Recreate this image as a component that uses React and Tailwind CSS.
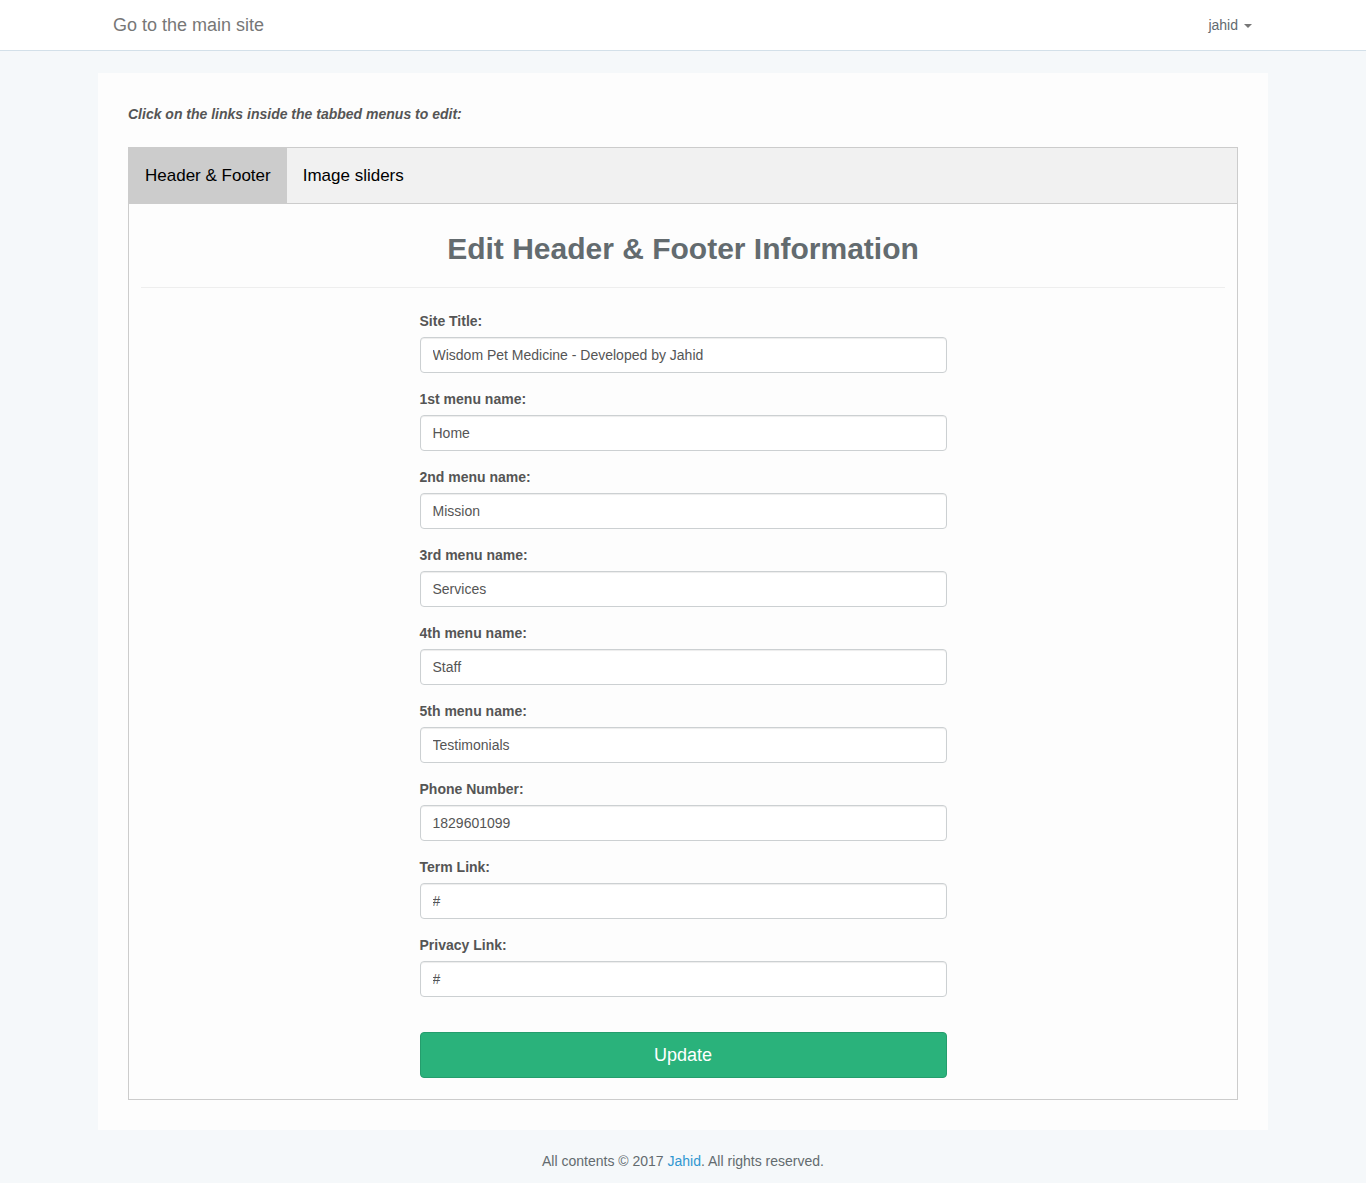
import React from 'react';

const fields = [
  { label: 'Site Title:', value: 'Wisdom Pet Medicine - Developed by Jahid' },
  { label: '1st menu name:', value: 'Home' },
  { label: '2nd menu name:', value: 'Mission' },
  { label: '3rd menu name:', value: 'Services' },
  { label: '4th menu name:', value: 'Staff' },
  { label: '5th menu name:', value: 'Testimonials' },
  { label: 'Phone Number:', value: '1829601099' },
  { label: 'Term Link:', value: '#' },
  { label: 'Privacy Link:', value: '#' },
];

const Navbar = () => (
  <nav className="h-[51px] bg-white border-b border-[#d3e0e9]">
    <div className="w-[1170px] mx-auto px-[15px] h-[50px] flex items-center justify-between">
      <a href="#" className="text-[18px] text-[#777] leading-[20px]">Go to the main site</a>
      <a href="#" className="flex items-center gap-[6px] text-[14px] text-[#636b6f] pr-[1px]">
        jahid
        <span className="w-0 h-0 border-x-[4px] border-x-transparent border-t-[4px] border-t-[#777] mt-[1px]" />
      </a>
    </div>
  </nav>
);

const FormField = ({ label, value }) => (
  <div className="mb-[15px]">
    <label className="block text-[14px] font-bold text-[#555] leading-[22px] mb-[5px]">{label}</label>
    <input
      type="text"
      defaultValue={value}
      className="w-full h-[36px] px-[12px] text-[14px] text-[#555] bg-white border border-[#ccd0d2] rounded-[4px] shadow-[inset_0_1px_1px_rgba(0,0,0,0.075)] outline-none"
    />
  </div>
);

export default function App() {
  return (
    <div className="min-h-screen bg-[#f5f8fa] font-['Liberation_Sans',Arial,sans-serif] text-[#636b6f]">
      <Navbar />

      <div className="w-[1170px] mx-auto mt-[22px] bg-[#fdfdfd] px-[30px] py-[30px]">
        <p className="text-[14px] font-bold italic text-[#555] leading-[22px] mb-[22px]">
          Click on the links inside the tabbed menus to edit:
        </p>

        {/* Tab box */}
        <div className="border border-[#ccc]">
          <div className="flex h-[56px] bg-[#f1f1f1] border-b border-[#ccc]">
            <button type="button" className="px-[16px] bg-[#ccc] text-[17px] text-black">Header &amp; Footer</button>
            <button type="button" className="px-[16px] text-[17px] text-black">Image sliders</button>
          </div>

          <div className="px-[12px] pt-[28px] pb-[21px]">
            <h2 className="text-center text-[30px] font-bold text-[#636b6f] leading-[33px]">
              Edit Header &amp; Footer Information
            </h2>
            <hr className="mt-[22px] mb-[22px] border-t border-[#eee]" />

            <form className="w-[527px] mx-auto" onSubmit={(e) => e.preventDefault()}>
              {fields.map((f) => (
                <FormField key={f.label} label={f.label} value={f.value} />
              ))}
              <button
                type="submit"
                className="mt-[20px] w-full h-[46px] bg-[#2ab27b] border border-[#259d6d] rounded-[4px] text-white text-[18px]"
              >
                Update
              </button>
            </form>
          </div>
        </div>
      </div>

      <footer className="text-center text-[14px] text-[#636b6f] pt-[21px] pb-[12px] leading-[20px]">
        All contents © 2017 <a href="#" className="text-[#3097d1]">Jahid</a>. All rights reserved.
      </footer>
    </div>
  );
}
